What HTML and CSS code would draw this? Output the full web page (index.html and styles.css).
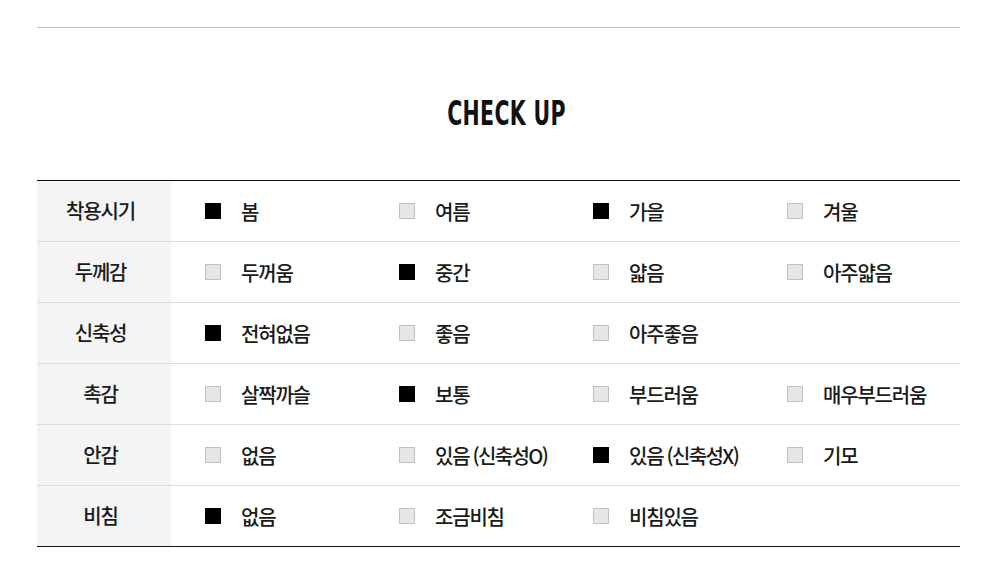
FILE: index.html
```html
<!DOCTYPE html>
<html lang="ko">
<head>
<meta charset="utf-8">
<link rel="stylesheet" href="styles.css">
</head>
<body>
<div class="wrap">
  <h2 class="title"><span>CHECK UP</span></h2>
  <div class="table">
    <div class="row">
      <div class="label">착용시기</div>
      <div class="opt"><i class="box on"></i>봄</div>
      <div class="opt"><i class="box"></i>여름</div>
      <div class="opt"><i class="box on"></i>가을</div>
      <div class="opt"><i class="box"></i>겨울</div>
    </div>
    <div class="row">
      <div class="label">두께감</div>
      <div class="opt"><i class="box"></i>두꺼움</div>
      <div class="opt"><i class="box on"></i>중간</div>
      <div class="opt"><i class="box"></i>얇음</div>
      <div class="opt"><i class="box"></i>아주얇음</div>
    </div>
    <div class="row">
      <div class="label">신축성</div>
      <div class="opt"><i class="box on"></i>전혀없음</div>
      <div class="opt"><i class="box"></i>좋음</div>
      <div class="opt"><i class="box"></i>아주좋음</div>
      <div class="opt"></div>
    </div>
    <div class="row">
      <div class="label">촉감</div>
      <div class="opt"><i class="box"></i>살짝까슬</div>
      <div class="opt"><i class="box on"></i>보통</div>
      <div class="opt"><i class="box"></i>부드러움</div>
      <div class="opt"><i class="box"></i>매우부드러움</div>
    </div>
    <div class="row">
      <div class="label">안감</div>
      <div class="opt"><i class="box"></i>없음</div>
      <div class="opt"><i class="box"></i>있음 <span class="sub">(신축성O)</span></div>
      <div class="opt"><i class="box on"></i>있음 <span class="sub">(신축성X)</span></div>
      <div class="opt"><i class="box"></i>기모</div>
    </div>
    <div class="row">
      <div class="label">비침</div>
      <div class="opt"><i class="box on"></i>없음</div>
      <div class="opt"><i class="box"></i>조금비침</div>
      <div class="opt"><i class="box"></i>비침있음</div>
      <div class="opt"></div>
    </div>
  </div>
</div>
</body>
</html>
```
FILE: styles.css
```css
html, body {
  margin: 0;
  padding: 0;
  background: #fff;
}
body {
  font-family: "Noto Sans CJK KR", "Noto Sans", sans-serif;
  color: #1a1a1a;
}
.wrap {
  margin: 0 38px 0 37px;
  padding-top: 27px;
}
.title {
  margin: 0;
  border-top: 1px solid #bdbdbd;
  height: 153px;
  display: flex;
  justify-content: center;
  align-items: flex-start;
  padding-left: 16px;
  box-sizing: border-box;
}
.title span {
  display: inline-block;
  margin-top: 65px;
  font-family: "DejaVu Sans Condensed", "Liberation Sans", sans-serif;
  font-weight: bold;
  font-size: 34px;
  line-height: 40px;
  color: #111;
  transform: scale(0.67, 1.0);
  letter-spacing: 0.5px;
}
.table {
  border-top: 1px solid #111;
  border-bottom: 1px solid #111;
}
.row {
  display: grid;
  grid-template-columns: 134px repeat(4, 194px);
  height: 60px;
  border-bottom: 1px solid #dcdcdc;
  font-size: 20px;
  font-weight: 500;
  letter-spacing: -1.2px;
}
.row:last-child {
  border-bottom: none;
}
.label {
  background: #f4f4f4;
  display: flex;
  align-items: center;
  justify-content: center;
  padding-right: 7px;
  padding-bottom: 1px;
}
.opt {
  display: flex;
  align-items: center;
  padding-left: 34px;
}
.box {
  display: inline-block;
  width: 16px;
  height: 16px;
  box-sizing: border-box;
  background: #e6e6e6;
  border: 1px solid #c2c2c2;
  margin-right: 20px;
  flex: none;
}
.box.on {
  background: #000;
  border-color: #000;
}
.sub {
  margin-left: 3px;
  letter-spacing: -1.6px;
}
```
